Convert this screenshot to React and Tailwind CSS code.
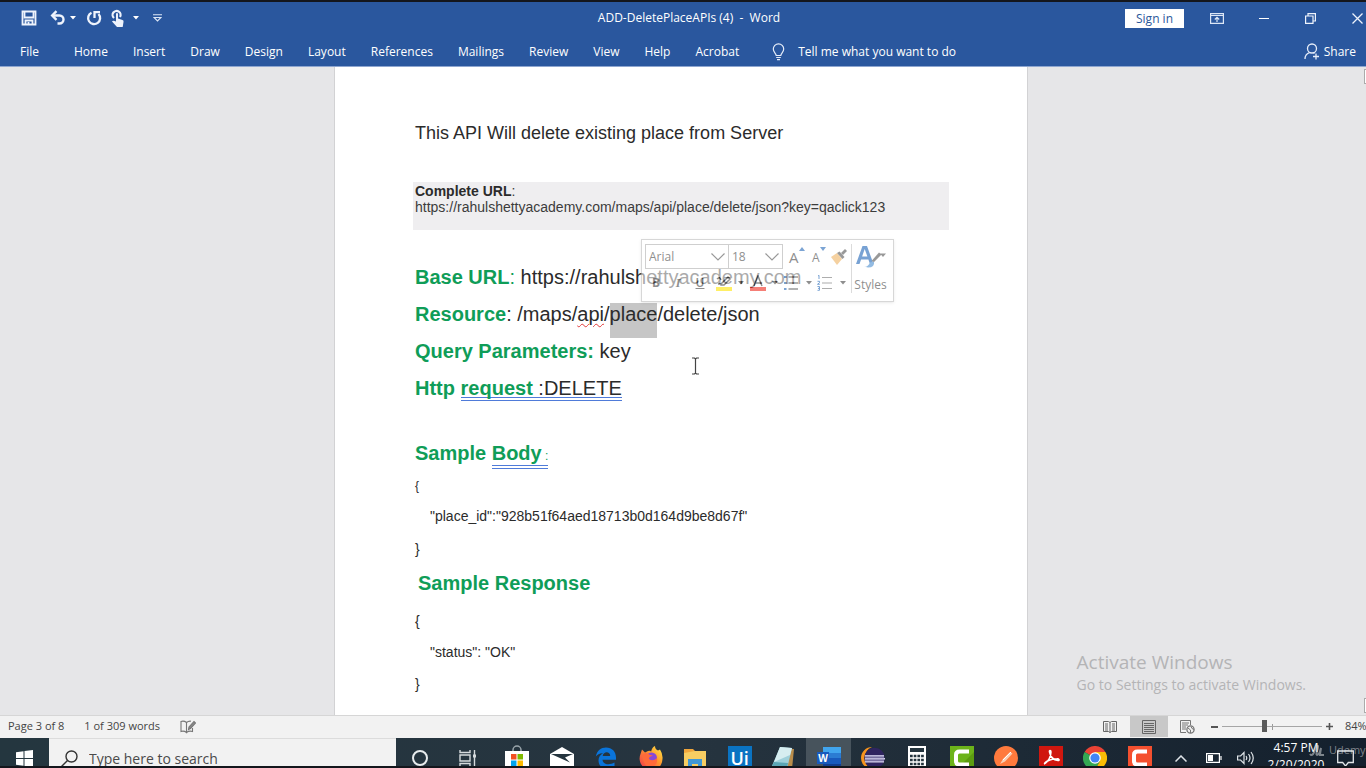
import React from "react";

const TABS = ["Home", "Insert", "Draw", "Design", "Layout", "References", "Mailings", "Review", "View", "Help", "Acrobat"];

function Caret({ className = "" }) {
  return (
    <svg viewBox="0 0 6 4" className={"w-[6px] h-[4px] shrink-0 " + className} aria-hidden="true">
      <path d="M0 0h6L3 3.6z" fill="currentColor" />
    </svg>
  );
}

function TitleBar() {
  return (
    <header className="flex h-8 items-center text-white">
      <div className="flex flex-1 items-center pl-[21px]">
        <button aria-label="Save" className="w-4 h-4">
          <svg viewBox="0 0 16 16" fill="none" stroke="#eef3fc" strokeWidth="1.8">
            <path d="M1.5 1.5h13v13h-13z" />
            <path d="M3.500 1.5v6h9v-6" />
            <path d="M4.5 14.5v-4h7v4" />
            <path d="M7.500 12v2.5" />
          </svg>
        </button>
        <button aria-label="Undo" className="ml-[13px] flex items-center gap-1">
          <svg viewBox="0 0 16 16" className="w-4 h-4" fill="none" stroke="#eef3fc" strokeWidth="2.4">
            <path d="M2.500 5.500h7a4 4 0 0 1 0 8H7.500" />
            <path d="M6.500 1.200L2.200 5.500l4.300 4.300" />
          </svg>
          <Caret />
        </button>
        <button aria-label="Repeat" className="ml-[10px] w-4 h-4">
          <svg viewBox="0 0 16 16" fill="none" stroke="#eef3fc" strokeWidth="2.300">
            <path d="M5.500 2.700A6 6 0 1 0 12.500 4" />
            <path d="M8.500 8V2.200h5.500" />
          </svg>
        </button>
        <button aria-label="Touch/Mouse Mode" className="ml-[9px] flex items-center gap-2">
          <svg viewBox="0 0 14 18" className="w-[14px] h-[18px]">
            <path d="M3 9A4 4 0 1 1 9 8" fill="none" stroke="#eef3fc" strokeWidth="2.200" />
            <path d="M5 4.500q1-1 2 0v5l4.500 1.500q1.500.5 1 2l-.8 5H6L1 12.500q.8-1.500 4 0z" fill="#eef3fc" />
          </svg>
          <Caret />
        </button>
        <button aria-label="Customize Quick Access Toolbar" className="ml-[14px] w-[9px] h-[8px]">
          <svg viewBox="0 0 9 8" fill="none" stroke="#dce6f6" strokeWidth="1.100">
            <path d="M0 .8h9M1 3.500h7L4.500 7z" />
          </svg>
        </button>
      </div>
      <h1 className="whitespace-pre pr-[6px] text-[12px]">ADD-DeletePlaceAPIs (4)  -  Word</h1>
      <div className="flex flex-1 items-center justify-end pr-[3px]">
        <button className="h-[19px] w-[59px] bg-white text-[12px] leading-[19px] text-[#2b579a]">Sign in</button>
        <button aria-label="Ribbon Display Options" className="ml-[26px] h-[11px] w-[14px]">
          <svg viewBox="0 0 14 11" fill="none" stroke="#dce6f6" strokeWidth="1.200">
            <path d="M.6.6h12.800v9.800H.6zM.6 2.500h12.800M7 9V4.500M4.800 6.500L7 4.300l2.200 2.200" />
          </svg>
        </button>
        <button aria-label="Minimize" className="ml-[35px] flex h-3 w-[10px] items-center">
          <span className="h-px w-full bg-white" />
        </button>
        <button aria-label="Restore Down" className="ml-9 h-[11px] w-[11px]">
          <svg viewBox="0 0 11 11" fill="none" stroke="#eef3fc" strokeWidth="1.200">
            <path d="M.6 3h7.400v7.400H.6zM3 3V.6h7.400V8H8" />
          </svg>
        </button>
        <button aria-label="Close" className="ml-9 h-[11px] w-[11px]">
          <svg viewBox="0 0 11 11" fill="none" stroke="#eef3fc" strokeWidth="1.300">
            <path d="M.5.5l10 10M10.500.5l-10 10" />
          </svg>
        </button>
      </div>
    </header>
  );
}

function Ribbon() {
  return (
    <nav aria-label="Ribbon" className="flex h-[33px] items-center border-b border-[#8ea6d0] pl-5 pr-[10px] pt-[3px] text-[12px] text-white">
      <button>File</button>
      <div className="ml-[35px] flex gap-[25px]">
        {TABS.map((t) => (
          <button key={t}>{t}</button>
        ))}
      </div>
      <button className="ml-[33px] flex items-center gap-[13px]">
        <svg viewBox="0 0 13 18" className="h-[18px] w-[13px]" fill="none" stroke="#e6edf9" strokeWidth="1.200">
          <path d="M4.200 12.500c0-2-2.900-3.200-2.900-6.500a5.200 5.200 0 0 1 10.400 0c0 3.300-2.900 4.500-2.900 6.500zM4.200 14.500h4.600M5 16.600h3" />
        </svg>
        Tell me what you want to do
      </button>
      <button className="ml-auto flex items-center gap-1">
        <svg viewBox="0 0 16 17" className="h-[17px] w-4" fill="none" stroke="#e6edf9" strokeWidth="1.300">
          <circle cx="8" cy="5.500" r="4.500" />
          <path d="M1 16c0-3.500 2-5.600 4.800-6.500M9.500 9.800l1 .6M12 10.500v6M9 13.500h6" />
        </svg>
        Share
      </button>
    </nav>
  );
}

function MiniToolbar() {
  return (
    <div role="toolbar" aria-label="Formatting" className="absolute left-[306px] top-[172px] flex h-[63px] w-[253px] border border-[#bdbdbd] bg-white pl-[3px] pt-1 font-['Open_Sans',sans-serif] text-[12px] text-[#444] opacity-60 shadow-sm">
      <div className="w-[206px] shrink-0">
        <div className="flex h-[25px] items-center">
          <label className="relative flex h-[25px] w-[84px] border border-[#b0b0b0]">
            <select aria-label="Font" className="w-full appearance-none bg-transparent pl-[3px] outline-none">
              <option>Arial</option>
            </select>
            <svg viewBox="0 0 14 8" className="pointer-events-none absolute right-[3px] top-2 h-2 w-[14px]" fill="none" stroke="#555" strokeWidth="1.200"><path d="M.5.5L7 7 13.500.5" /></svg>
          </label>
          <label className="relative flex h-[25px] w-[54px] border border-l-0 border-[#b0b0b0]">
            <select aria-label="Font size" className="w-full appearance-none bg-transparent pl-[3px] outline-none">
              <option>18</option>
            </select>
            <svg viewBox="0 0 14 8" className="pointer-events-none absolute right-[3px] top-2 h-2 w-[14px]" fill="none" stroke="#555" strokeWidth="1.200"><path d="M.5.5L7 7 13.500.5" /></svg>
          </label>
          <button aria-label="Increase font size" className="ml-[6px] flex h-5 w-4 items-start text-[15px] leading-5">
            A<svg viewBox="0 0 6 4" className="h-1 w-[6px] shrink-0"><path d="M0 4h6L3 0z" fill="#2468b8" /></svg>
          </button>
          <button aria-label="Decrease font size" className="ml-[7px] flex h-5 w-4 items-start text-[12px] leading-[22px]">
            A<svg viewBox="0 0 6 4" className="h-1 w-[6px] shrink-0"><path d="M0 0h6L3 4z" fill="#2468b8" /></svg>
          </button>
          <button aria-label="Format Painter" className="ml-[3px] h-4 w-4">
            <svg viewBox="0 0 16 16">
              <path d="M0 8l6-4 5 6-5 6z" fill="#efb362" />
              <path d="M6 4l2.500-1.500 5 5.500-2 2z" fill="#555" />
              <path d="M10 4l4-4 2 2-4 4z" fill="#555" />
            </svg>
          </button>
        </div>
        <div className="flex h-7 items-center pl-[6px]">
          <button aria-label="Bold" className="w-[10px] font-bold">B</button>
          <button aria-label="Italic" className="ml-3 w-[10px] font-['Liberation_Serif',serif] font-bold italic">I</button>
          <button aria-label="Underline" className="ml-3 w-[10px] font-semibold underline">U</button>
          <button aria-label="Text highlight color" className="ml-[11px] flex items-center gap-[6px]">
            <svg viewBox="0 0 16 16" className="h-4 w-4">
              <path d="M0 12h16v4H0z" fill="#ffe600" />
              <path d="M5 9l7-7 2 2-6 6H5zM1 4q3-3 4 1M2 9h3" fill="none" stroke="#444" strokeWidth="1.500" />
            </svg>
            <Caret />
          </button>
          <button aria-label="Font color" className="ml-[6px] flex items-center gap-[6px]">
            <svg viewBox="0 0 16 16" className="h-4 w-4">
              <path d="M0 12h16v4H0z" fill="#f02b1d" />
              <path d="M4 11l4-10 4 10M5.500 8h5" fill="none" stroke="#444" strokeWidth="1.500" />
            </svg>
            <Caret />
          </button>
          <button aria-label="Bullets" className="ml-[6px] flex items-center gap-2">
            <svg viewBox="0 0 14 16" className="h-4 w-[14px]" strokeWidth="1.300">
              <path d="M4.500 2H14M4.500 8H14M4.500 14H14" stroke="#555" />
              <path d="M0 1h2.500v2H0zM0 7h2.500v2H0zM0 13h2.500v2H0z" fill="#2468b8" />
            </svg>
            <Caret />
          </button>
          <button aria-label="Numbering" className="ml-[5px] flex items-center gap-2">
            <svg viewBox="0 0 15 16" className="h-4 w-[15px]" fill="none">
              <path d="M5 2.500h10M5 8h10M5 13.500h10" stroke="#777" strokeWidth="1.200" />
              <path d="M1 1l1-.7V4M.5 6.300h2v1.400l-2 1.600h2.300M.5 11.500h2v3.800h-2M1 13.400h1.500" stroke="#2468b8" />
            </svg>
            <Caret />
          </button>
        </div>
      </div>
      <button className="flex h-[49px] flex-1 flex-col items-center justify-between border-l border-[#c4c4c4] pr-1 text-[12px]">
        <svg viewBox="0 0 30 24" className="h-6 w-[30px] shrink-0">
          <path d="M0 20L6.500 2h4.500L17.500 20H14l-1.600-4.500H5.100L3.500 20zM6.100 12.500h5.300L8.700 5z" fill="#1f66b8" />
          <path d="M8 22.500q4 1 6-4l4-1q1 6-6 6z" fill="#4d8fd0" />
          <path d="M15.500 17l7.500-8.500 2.500 2L18 18zM24 9.500h6l-3 3.500z" fill="#555" />
        </svg>
        <span className="leading-4">Styles</span>
      </button>
    </div>
  );
}

function Key({ children }) {
  return <strong className="font-bold text-[#0f9d58]">{children}</strong>;
}

function GrammarMark({ children }) {
  return <span className="inline-block border-b-4 border-double border-[#4f7bd9] leading-[18px]">{children}</span>;
}

function Document() {
  return (
    <article className="relative h-full w-[694px] shrink-0 border-x border-[#d2d2d4] bg-white px-[78px] pt-[54px] font-['Liberation_Sans',sans-serif] text-[#2b2b2b]">
      <p className="pl-[2px] text-[18px] leading-6">This API Will delete existing place from Server</p>
      <div className="mt-[37px] bg-[#efeef0] px-[2px] pb-[15px] pt-px text-[14px] leading-4 text-[#3c3c3c]">
        <p><strong className="text-[#2b2b2b]">Complete URL</strong>:</p>
        <p>https://rahulshettyacademy.com/maps/api/place/delete/json?key=qaclick123</p>
      </div>
      <div className="mt-[35px] pl-[2px] text-[20px] leading-6">
        <p className="pb-[13px]"><Key>Base URL</Key><span className="text-[#0f9d58]">:</span> https://rahulshettyacademy.com</p>
        <p className="pb-[13px]">
          <Key>Resource</Key>: /maps/<span className="underline decoration-[#e03a3a] decoration-wavy decoration-1 underline-offset-2">api</span>/<span className="bg-[#c6c6c6] pb-[13px]">place</span>/delete/json
        </p>
        <p className="pb-[13px]"><Key>Query Parameters:</Key> key</p>
        <p className="pb-[13px]">
          <Key>Http </Key><GrammarMark><Key>request </Key>:DELETE</GrammarMark>
        </p>
        <h2 className="mt-[27px] font-bold text-[#0f9d58]">
          Sample <GrammarMark>Body<span className="text-[12px] font-normal"> :</span></GrammarMark>
        </h2>
      </div>
      <div className="pl-[2px] text-[14px] leading-4">
        <p className="mt-[9px] text-[12px]">{"{"}</p>
        <p className="mt-[14px] pl-[15px]">"place_id":"928b51f64aed18713b0d164d9be8d67f"</p>
        <p className="mt-[17px]">{"}"}</p>
        <h2 className="mt-[14px] pl-[3px] text-[20px] font-bold leading-6 text-[#0f9d58]">Sample Response</h2>
        <p className="mt-[18px]">{"{"}</p>
        <p className="mt-[15px] pl-[15px]">"status": "OK"</p>
        <p className="mt-4">{"}"}</p>
      </div>
      <MiniToolbar />
      <svg viewBox="0 0 9 18" className="absolute left-[356px] top-[290px] h-[18px] w-[9px]" fill="none" stroke="#444" strokeWidth="1.200" aria-hidden="true">
        <path d="M1 1h2.500l1 1 1-1H8M4.500 2v14M1 17h2.500l1-1 1 1H8" />
      </svg>
    </article>
  );
}

function StatusBar() {
  return (
    <footer className="flex h-[23px] shrink-0 items-center overflow-hidden border-t border-[#d6d6d6] bg-[#f2f2f2] pb-px pl-2 text-[11px] text-[#444]">
      <span>Page 3 of 8</span>
      <span className="ml-5">1 of 309 words</span>
      <button aria-label="Proofing" className="ml-5 h-[14px] w-4">
        <svg viewBox="0 0 16 14" fill="none" stroke="#777" strokeWidth="1.100">
          <path d="M6.500 2.500Q4 .5 1 1.500v10q3-1 5.500 1zM6.500 2.500Q8.500.8 11 1.200M6.500 12.500q2.500-2 6-1V8" />
          <path d="M8.500 9.500L9 7l5-5.500L15.500 3l-5 5.500z" fill="#888" />
        </svg>
      </button>
      <div className="ml-auto flex h-full items-center">
        <button aria-label="Read Mode" className="h-3 w-[14px]">
          <svg viewBox="0 0 14 12" fill="none" stroke="#666">
            <path d="M.5.5h5L7 1.500 8.500.5h5v10h-5L7 11.500l-1.500-1h-5zM7 1.500v10M2 3h3M2 5h3M2 7h3M2 9h3M9 3h3M9 5h3M9 7h3M9 9h3" />
          </svg>
        </button>
        <button aria-label="Print Layout" className="ml-[13px] flex h-full w-[38px] items-center justify-center bg-[#c8c8c8]">
          <svg viewBox="0 0 14 14" className="h-[14px] w-[14px]" fill="none" stroke="#666">
            <path d="M.5.5h13v13H.5zM2 3.500h10M2 5.500h10M2 7.500h10M2 9.500h10M2 11.500h10" />
          </svg>
        </button>
        <button aria-label="Web Layout" className="ml-3 h-[14px] w-[15px]">
          <svg viewBox="0 0 15 14" fill="none" stroke="#777">
            <path d="M6 12.500H.5V.5h10V5M2 3h7M2 5h6M2 7h4M2 9h4" />
            <circle cx="10.500" cy="9.500" r="3.600" fill="#f2f2f2" strokeWidth="1.300" />
            <path d="M8 8l2.500 2v3M11 6.500l1 2 2 1" />
          </svg>
        </button>
        <button aria-label="Zoom out" className="ml-4 flex h-3 w-[7px] items-center"><span className="h-[2px] w-full bg-[#555]" /></button>
        <span className="relative ml-1 flex w-[100px] items-center">
          <span className="absolute left-[50px] h-[6px] w-px bg-[#999]" />
          <input
            type="range"
            aria-label="Zoom"
            min="0"
            max="100"
            defaultValue="42"
            className="relative h-3 w-full appearance-none bg-transparent [&::-webkit-slider-runnable-track]:h-px [&::-webkit-slider-runnable-track]:bg-[#a6a6a6] [&::-webkit-slider-thumb]:-mt-[6px] [&::-webkit-slider-thumb]:h-3 [&::-webkit-slider-thumb]:w-[5px] [&::-webkit-slider-thumb]:appearance-none [&::-webkit-slider-thumb]:bg-[#5a5a5a]"
          />
        </span>
        <button aria-label="Zoom in" className="ml-1 h-[7px] w-[7px]">
          <svg viewBox="0 0 7 7" stroke="#555" strokeWidth="1.600"><path d="M3.500 0v7M0 3.500h7" /></svg>
        </button>
        <button className="ml-3 w-[21px] whitespace-nowrap text-left">84%</button>
      </div>
    </footer>
  );
}

const APPS = [
  ["Microsoft Store", (
    <svg viewBox="0 0 24 26" className="h-[26px] w-6">
      <path d="M8 7V5a4 4 0 0 1 8 0v2" fill="none" stroke="#9aa5ab" strokeWidth="1.500" />
      <path d="M0 6h24v20H0z" fill="#fff" />
      <path d="M6 9h5.500v5.500H6z" fill="#f25022" /><path d="M12.500 9H18v5.500h-5.500z" fill="#7fba00" />
      <path d="M6 15.500h5.500V21H6z" fill="#00a4ef" /><path d="M12.500 15.500H18V21h-5.500z" fill="#ffb900" />
    </svg>
  )],
  ["Mail", (
    <svg viewBox="0 0 24 22" className="h-[22px] w-6">
      <path d="M0 7L12 0l12 7v15H0z" fill="#fff" />
      <path d="M1 7h22l-8 3.500 5 5z" fill="#24343e" />
    </svg>
  )],
  ["Microsoft Edge", (
    <svg viewBox="0 0 22 22" className="h-[22px] w-[22px]">
      <path d="M.8 9.500C2 3.500 6 .5 11 .5c6 0 10 4.200 10 10v2.200H7.500c.3 5 7 5.800 12 2.900v4.500c-7 3.500-16 1.400-16-6.600 0-3.500 2-6 4.500-7.300C4.500 6 2.500 7.500.8 9.500zM7.700 9h7.500c0-5-6.800-5-7.500 0z" fill="#0a74da" />
    </svg>
  )],
  ["Firefox", (
    <svg viewBox="0 0 24 24" className="h-6 w-6">
      <defs>
        <linearGradient id="fx" x1="1" y1="0" x2="0" y2="1"><stop offset="0" stopColor="#fff14a" /><stop offset=".4" stopColor="#ff9a2e" /><stop offset="1" stopColor="#f0304e" /></linearGradient>
      </defs>
      <path d="M12 24A11.500 11.500 0 0 1 1.500 8L3 3.500l3 3L9 5q3-1 3 1 1-5 4-6 0 3 3 4.500l2-1Q24 8 23.500 13 22.500 24 12 24z" fill="url(#fx)" />
      <circle cx="12.500" cy="12" r="5.500" fill="#8748d8" />
      <path d="M3 9q4-4 8 0 2 0 3 1-4 0-4 3 4 3 8-1 1 8-6 9T3 9z" fill="#ff6a3a" />
    </svg>
  )],
  ["File Explorer", (
    <svg viewBox="0 0 22 20" className="h-5 w-[22px]">
      <path d="M0 1h9l2 2h11v17H0z" fill="#f0a63c" /><path d="M0 5l11-2h11v17H0z" fill="#f7cd62" />
      <path d="M4 20v-9h14v9h-4v-4H8v4z" fill="#3f97d6" />
    </svg>
  )],
  ["UiPath", (
    <span className="h-6 w-6 bg-[#0a73c2] text-center text-[18px] font-semibold leading-6 text-white">Ui</span>
  )],
  ["Notepad", (
    <svg viewBox="0 0 24 24" className="h-6 w-6">
      <path d="M8 2l14 1-2 20-4 1z" fill="#b98d4b" /><path d="M8 1l12 1-5 21L0 20z" fill="#9fd0da" /><path d="M8 1l12 1-2 7L2 16z" fill="#d6edf0" /><path d="M2 16l14 1-1 6L0 20z" fill="#5ba6b5" />
    </svg>
  )],
  ["Word", (
    <svg viewBox="0 0 24 24" className="h-6 w-6">
      <path d="M6 1h18v6H6z" fill="#41a5ee" /><path d="M6 7h18v5H6z" fill="#2b7cd3" /><path d="M6 12h18v6H6z" fill="#185abd" /><path d="M6 18h18v5H6z" fill="#103f91" />
      <path d="M0 6h12v12H0z" fill="#185abd" />
      <text x="6" y="15.500" textAnchor="middle" fontSize="10" fontWeight="700" fill="#fff">W</text>
    </svg>
  )],
  ["Eclipse", (
    <svg viewBox="0 0 24 22" className="h-[22px] w-6">
      <path d="M11 0a11 11 0 0 0 0 22A12 12 0 0 1 11 0z" fill="#f7941e" />
      <circle cx="13.500" cy="11" r="10.300" fill="#2f2560" />
      <path d="M4 8h19v1.500H4zM4 11h20v1.500H4zM4 14h19v1.500H4z" fill="#d8d5ea" /><path d="M4 8h19v7H4z" fill="#a9a4cc" opacity=".6" />
    </svg>
  )],
  ["Calculator", (
    <svg viewBox="0 0 18 24" className="h-6 w-[18px]">
      <path d="M0 0h18v24H0z" fill="#fff" />
      <path d="M2 2h14v4H2z" fill="#24343e" />
      <path d="M2 10h14M2 14h14M2 18h14M2 22h14" stroke="#24343e" strokeWidth="2.500" strokeDasharray="2.700 1" />
    </svg>
  )],
  ["Camtasia", (
    <svg viewBox="0 0 24 24" className="h-6 w-6">
      <path d="M0 0h24v24H0z" fill="#5c9c10" /><path d="M0 0h24v6L6 24H0z" fill="#6cb31a" />
      <path d="M19 5.500H9.500Q6 5.500 6 9v6q0 3.500 3.500 3.500H19" fill="none" stroke="#fff" strokeWidth="4" />
    </svg>
  )],
  ["Postman", (
    <svg viewBox="0 0 24 24" className="h-6 w-6">
      <circle cx="12" cy="12" r="12" fill="#ff7a3d" />
      <path d="M6 18l3-5 7-7 2.500 1.500-7.500 8z" fill="#f9cfb5" /><path d="M9 14l8-8" stroke="#fff" />
    </svg>
  )],
  ["Adobe Acrobat", (
    <svg viewBox="0 0 24 24" className="h-6 w-6">
      <path d="M0 0h24v24H0z" fill="#d0170f" />
      <path d="M5 18c4-2 7-7 7-12 0-2-2-2-1.500 0 1 5 4 8 8.500 8.500 2 0 1-2-1-1.700C13 13 9 14 5.500 17" fill="none" stroke="#fff" strokeWidth="1.500" />
    </svg>
  )],
  ["Google Chrome", (
    <svg viewBox="0 0 24 24" className="h-6 w-6">
      <path d="M12 12L1.600 6A12 12 0 0 1 22.400 6z" fill="#ea4335" /><path d="M12 12L1.600 6A12 12 0 0 0 12 24l5-9z" fill="#34a853" /><path d="M12 12l5 3-5 9A12 12 0 0 0 22.400 6H12z" fill="#fbbc05" />
      <circle cx="12" cy="12" r="5.800" fill="#fff" /><circle cx="12" cy="12" r="4.600" fill="#4285f4" />
    </svg>
  )],
  ["Camtasia Recorder", (
    <svg viewBox="0 0 24 24" className="h-6 w-6">
      <path d="M0 0h24v24H0z" fill="#f4502f" />
      <path d="M19 5.500H9.500Q6 5.500 6 9v6q0 3.500 3.500 3.500H19" fill="none" stroke="#fff" strokeWidth="4" />
    </svg>
  )],
];

function Taskbar() {
  return (
    <div className="h-7 shrink-0 overflow-hidden bg-linear-to-r from-[#24363f] via-[#26343f] to-[#14202d]">
      <div className="flex h-10 items-center">
        <button aria-label="Start" className="flex h-full w-[49px] shrink-0 items-center justify-center">
          <svg viewBox="0 0 17 17" className="h-[17px] w-[17px]" fill="#fff">
            <path d="M0 2.200l7.500-1V8H0zM8.500 1L17 0v8H8.500zM0 9h7.500v6.800l-7.500-1zM8.500 9H17v8l-8.500-1z" />
          </svg>
        </button>
        <label className="flex h-full w-[347px] shrink-0 items-center border-t border-[#dcdcdc] bg-[#f2f2f2] pl-3">
          <svg viewBox="0 0 17 17" className="h-[17px] w-[17px] shrink-0" fill="none" stroke="#333" strokeWidth="1.400">
            <circle cx="10.500" cy="6.500" r="5.500" /><path d="M6.500 10.500L.5 16.500" />
          </svg>
          <input aria-label="Search" placeholder="Type here to search" className="ml-[11px] w-full bg-transparent text-[14px] outline-none placeholder:text-[#4a4a4a]" />
        </label>
        <button aria-label="Cortana" className="flex w-12 shrink-0 justify-center">
          <span className="h-4 w-4 rounded-full border-2 border-[#e8ecee]" />
        </button>
        <button aria-label="Task View" className="flex w-12 shrink-0 justify-center">
          <svg viewBox="0 0 18 16" className="h-4 w-[18px]" fill="none" stroke="#d5dadd" strokeWidth="1.400">
            <path d="M1 0v2.500h10V0M1 5h10v6H1zM1 16v-2.500h10V16M15.500 0v16" /><path d="M14 4.500h3v3h-3z" fill="#d5dadd" stroke="none" />
          </svg>
        </button>
        <div className="ml-[3px] flex h-full min-w-0 flex-1">
          {APPS.map(([name, icon]) => (
            <button key={name} aria-label={name} className={"flex h-full min-w-0 flex-1 items-center justify-center " + (name === "Word" ? "bg-[#47535c]" : "")}>
              {icon}
            </button>
          ))}
        </div>
        <div className="relative flex h-full w-[204px] shrink-0 items-center text-white">
          <button aria-label="Show hidden icons" className="ml-[13px] h-[7px] w-3">
            <svg viewBox="0 0 12 7" fill="none" stroke="#dfe4e8" strokeWidth="1.500"><path d="M.5 6.500L6 1l5.500 5.500" /></svg>
          </button>
          <button aria-label="Battery" className="ml-[19px] h-[10px] w-4">
            <svg viewBox="0 0 16 10"><path d="M.6.6h12.800v8.800H.6zM15 3v4" fill="none" stroke="#fff" strokeWidth="1.200" /><path d="M2 2h5v6H2z" fill="#fff" /></svg>
          </button>
          <button aria-label="Volume" className="ml-[15px] h-[14px] w-[17px]">
            <svg viewBox="0 0 17 14" fill="none" stroke="#dfe4e8" strokeWidth="1.200">
              <path d="M.6 5h3L7 1.500v11L3.600 9h-3zM9 5q1.500 2 0 4M11.500 3q3 4 0 8M14 1q4.500 6 0 12" />
            </svg>
          </button>
          <button className="ml-[11px] h-full w-[62px] pb-1 text-center text-[12px] leading-[17px]">
            4:57 PM
            <br />
            2/20/2020
          </button>
          <button aria-label="Notifications" className="ml-[10px] h-[17px] w-[17px]">
            <svg viewBox="0 0 17 17" fill="none" stroke="#e4e7ea" strokeWidth="1.300"><path d="M.7 1h15.600v11.500h-5L8.500 16l-2.800-3.500h-5z" /></svg>
          </button>
          <span className="pointer-events-none absolute left-[147px] top-1 flex items-center gap-1 text-[11px] text-white/45">
            <svg viewBox="0 0 16 14" className="h-[14px] w-4 shrink-0" fill="none" stroke="currentColor" strokeWidth="2">
              <path d="M1 11c2 3 4-1 5-4s2-5 3-4-3 9-1 9 3-3 4-7q-1 6-1 7h4" />
            </svg>
            <span className="leading-4">Udemy</span>
          </span>
        </div>
      </div>
    </div>
  );
}

export default function App() {
  return (
    <div className="flex h-screen flex-col overflow-hidden border-y-2 border-[#14161c] font-['Open_Sans',sans-serif]">
      <div className="shrink-0 bg-[#2a579e]">
        <TitleBar />
        <Ribbon />
      </div>
      <main className="relative flex min-h-0 flex-1 overflow-hidden bg-[#e6e6e8]">
        <div className="flex min-w-0 flex-1 justify-center">
          <Document />
        </div>
        <div className="flex w-1 shrink-0 flex-col justify-between pl-[2px]">
          <span className="mt-[2px] h-[15px] border border-r-0 border-[#ababab] bg-white" />
          <span className="mb-[2px] h-[15px] border border-r-0 border-[#ababab] bg-white" />
        </div>
        <div className="pointer-events-none absolute bottom-5 right-[60px] whitespace-nowrap text-[#b4b4b6]">
          <p className="text-[19px] leading-[25px]">Activate Windows</p>
          <p className="text-[14px] leading-5">Go to Settings to activate Windows.</p>
        </div>
      </main>
      <StatusBar />
      <Taskbar />
    </div>
  );
}
